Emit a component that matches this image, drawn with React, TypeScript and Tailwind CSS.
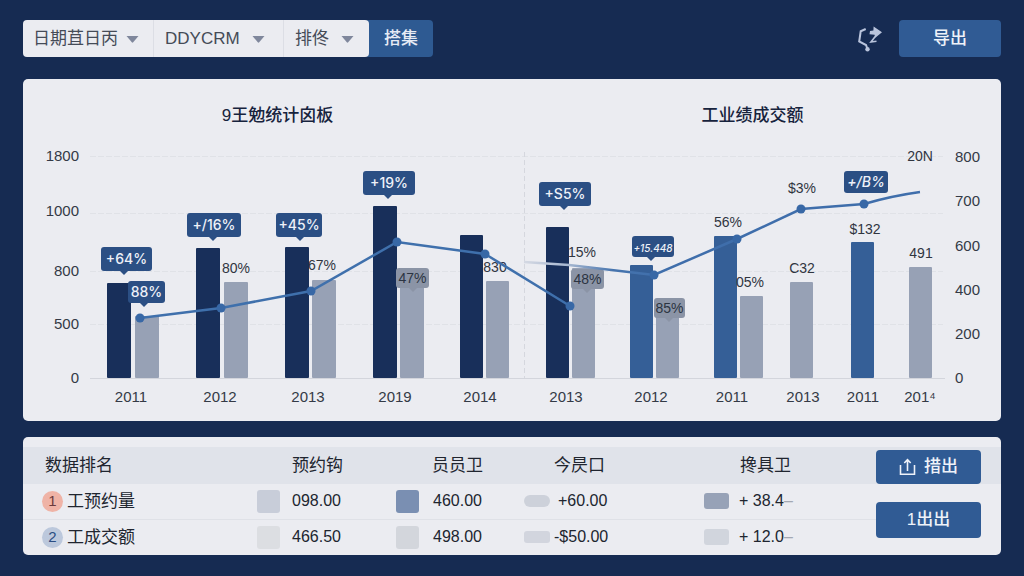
import { clsx } from "clsx";

const filters = [
  { id: "date", label: "日期", options: ["日期苴日丙"], width: "w-[130px] pl-[10px]", caret: "right-[14px]" },
  { id: "source", label: "CRM", options: ["DDYCRM"], width: "w-[130px] pl-3", caret: "right-[18px]" },
  { id: "rank", label: "排名", options: ["排佟"], width: "w-[86px] pl-3", caret: "right-[15px]" },
];

const BASELINE = 238;

const bars = [
  { x: 84, top: 143, tone: "navy" },
  { x: 112, top: 176, tone: "gray" },
  { x: 173, top: 108, tone: "navy" },
  { x: 201, top: 142, tone: "gray" },
  { x: 262, top: 107, tone: "navy" },
  { x: 289, top: 140, tone: "gray" },
  { x: 350, top: 66, tone: "navy" },
  { x: 377, top: 130, tone: "gray" },
  { x: 437, top: 95, tone: "navy" },
  { x: 463, top: 141, tone: "gray" },
  { x: 523, top: 87, tone: "navy" },
  { x: 549, top: 128, tone: "gray" },
  { x: 607, top: 125, tone: "blue" },
  { x: 633, top: 160, tone: "gray" },
  { x: 691, top: 96, tone: "blue" },
  { x: 717, top: 156, tone: "gray" },
  { x: 767, top: 142, tone: "gray" },
  { x: 828, top: 102, tone: "blue" },
  { x: 886, top: 127, tone: "gray" },
];

const barFill: Record<string, string> = {
  navy: "fill-[#182f5a]",
  blue: "fill-[#355f97]",
  gray: "fill-[#97a1b5]",
};

const years = [
  { x: 108, text: "2011" },
  { x: 197, text: "2012" },
  { x: 285, text: "2013" },
  { x: 372, text: "2019" },
  { x: 457, text: "2014" },
  { x: 543, text: "2013" },
  { x: 628, text: "2012" },
  { x: 709, text: "2011" },
  { x: 780, text: "2013" },
  { x: 840, text: "2011" },
  { x: 897, text: "201⁴" },
];

const leftAxis = [
  { y: 16, text: "1800" },
  { y: 71, text: "1000" },
  { y: 131, text: "800" },
  { y: 184, text: "500" },
  { y: 238, text: "0" },
];

const rightAxis = [
  { y: 17, text: "800" },
  { y: 61, text: "700" },
  { y: 106, text: "600" },
  { y: 150, text: "400" },
  { y: 194, text: "200" },
  { y: 238, text: "0" },
];

const labels = [
  { x: 213, y: 128, text: "80%" },
  { x: 299, y: 125, text: "67%" },
  { x: 472, y: 127, text: "830" },
  { x: 559, y: 112, text: "15%" },
  { x: 705, y: 82, text: "56%" },
  { x: 727, y: 142, text: "05%" },
  { x: 779, y: 48, text: "$3%" },
  { x: 779, y: 128, text: "C32" },
  { x: 842, y: 89, text: "$132" },
  { x: 898, y: 113, text: "491" },
  { x: 897, y: 16, text: "20N" },
];

type Badge = {
  x: number;
  y: number;
  w: number;
  h: number;
  tip?: number;
  text: string;
  muted?: boolean;
  className?: string;
};

const badges: Badge[] = [
  { x: 78, y: 107, w: 51, h: 24, tip: 101, text: "+64%" },
  { x: 105, y: 141, w: 37, h: 22, tip: 121, text: "88%" },
  { x: 164, y: 73, w: 54, h: 24, tip: 190, text: "+/16%" },
  { x: 253, y: 73, w: 46, h: 24, tip: 277, text: "+45%" },
  { x: 340, y: 31, w: 52, h: 24, tip: 365, text: "+19%" },
  { x: 516, y: 42, w: 52, h: 24, tip: 541, text: "+S5%" },
  { x: 609, y: 96, w: 42, h: 21, tip: 628, text: "+15.448", className: "text-[10px] italic" },
  { x: 821, y: 31, w: 44, h: 22, text: "+/B%", className: "text-[14px] italic" },
  { x: 373, y: 128, w: 33, h: 20, tip: 390, text: "47%", muted: true },
  { x: 548, y: 129, w: 33, h: 20, tip: 564, text: "48%", muted: true },
  { x: 631, y: 158, w: 31, h: 20, tip: 646, text: "85%", muted: true },
];

const firstLine = [
  [117, 178],
  [198, 168],
  [288, 151],
  [374, 102],
  [462, 114],
  [547, 166],
];

const secondDots = [
  [631, 135],
  [714, 99],
  [778, 69],
  [841, 64],
];

const columns = [
  { title: "预约钩", pad: "pl-[35px]" },
  { title: "员员卫", pad: "pl-9" },
  { title: "今昃口", pad: "pl-[30px]" },
  { title: "搀具卫", pad: "pl-9" },
];

const rows = [
  {
    rank: 1,
    name: "工预约量",
    badge: "bg-[#efb3a6] text-[#6b3a3c]",
    cells: [
      { value: "098.00", swatch: "h-[23px] w-[23px] mr-3 bg-[#c8cdd9]" },
      { value: "460.00", swatch: "h-[23px] w-[23px] mr-[14px] bg-[#7a8fb2]" },
      { value: "+60.00", swatch: "h-3 w-[26px] mr-2 rounded-md bg-[#cdd1da]" },
      { value: "+ 38.4", swatch: "h-4 w-[25px] mr-[10px] bg-[#97a2b7]" },
    ],
  },
  {
    rank: 2,
    name: "工成交额",
    badge: "bg-[#bcc8dc] text-[#2b4d83]",
    cells: [
      { value: "466.50", swatch: "h-[23px] w-[23px] mr-3 bg-[#dcdee2]" },
      { value: "498.00", swatch: "h-[23px] w-[23px] mr-[14px] bg-[#d3d6dc]" },
      { value: "-$50.00", swatch: "h-3 w-[26px] mr-1 bg-[#d2d5de]" },
      { value: "+ 12.0", swatch: "h-4 w-[25px] mr-[10px] bg-[#d1d5dd]" },
    ],
  },
];

function FilterBar() {
  return (
    <form className="flex h-full" onSubmit={(e) => e.preventDefault()}>
      <div className="relative z-10 flex items-stretch rounded-[4px] bg-[#ebecf1]">
        {filters.map((filter, index) => (
          <div key={filter.id} className={clsx("relative flex", index > 0 && "border-l border-[#dcdee5]")}>
            <select
              aria-label={filter.label}
              className={clsx(
                "appearance-none bg-transparent pt-px pr-7 text-[17px] text-[#454b57] outline-none",
                filter.width,
                index > 0 && "-ml-px",
              )}
            >
              {filter.options.map((option) => (
                <option key={option}>{option}</option>
              ))}
            </select>
            <svg
              viewBox="0 0 13 7"
              className={clsx("pointer-events-none absolute top-4 h-[7px] w-[13px] fill-[#7f879c]", filter.caret)}
            >
              <path d="M0.5 0h12L7.2 6.3a1 1 0 0 1-1.4 0z" />
            </svg>
          </div>
        ))}
      </div>
      <button type="submit" className="-ml-1 w-[68px] rounded-[4px] bg-[#2e5a92] pt-px pl-1 text-[17px] font-medium text-[#e6ebf5]">
        搭集
      </button>
    </form>
  );
}

function BadgeShape({ x, y, w, h, tip, text, muted, className }: Badge) {
  return (
    <g className={muted ? "fill-[#8b94a6]" : "fill-[#2b4f84]"}>
      <rect x={x} y={y} width={w} height={h} rx={3} />
      {tip && <path d={`M${tip - 5} ${y + h - 1}h10l-5 5z`} />}
      <text
        x={x + w / 2}
        y={y + h / 2 + 5}
        textAnchor="middle"
        className={clsx(
          muted ? "fill-[#2c3442]" : "fill-[#eef1f8] font-medium font-['Inter',sans-serif]",
          className ?? "text-[14px]",
        )}
      >
        {text}
      </text>
    </g>
  );
}

function Chart() {
  return (
    <svg viewBox="0 0 978 270" className="mt-3 block h-auto w-full" role="img" aria-label="业绩统计">
      <defs>
        <linearGradient id="trend" gradientUnits="userSpaceOnUse" x1="501" y1="0" x2="650" y2="0">
          <stop offset="0" stopColor="#d5d9e3" />
          <stop offset="0.3" stopColor="#a5b6d0" />
          <stop offset="0.6" stopColor="#4674ae" />
          <stop offset="1" stopColor="#3f6eab" />
        </linearGradient>
      </defs>

      {/* Grid */}
      <g className="stroke-[#e0e2e7]">
        {[16, 73, 131, 184].map((y) => (
          <line key={y} x1={67} x2={920} y1={y + 0.5} y2={y + 0.5} strokeDasharray="6 2" />
        ))}
        <line x1={501.5} x2={501.5} y1={12} y2={238} strokeDasharray="5 3" className="stroke-[#d5d7de]" />
      </g>

      {bars.map((bar) => (
        <rect
          key={bar.x}
          x={bar.x}
          y={bar.top}
          width={bar.x < 420 ? 24 : 23}
          height={BASELINE - bar.top}
          rx={1}
          className={barFill[bar.tone]}
        />
      ))}
      <line x1={67} x2={922} y1={238.5} y2={238.5} className="stroke-[#d3d5dc]" />

      {/* Axes */}
      <g className="fill-[#343a46] text-[15px]">
        {leftAxis.map((tick) => (
          <text key={tick.text} x={56} y={tick.y + 5} textAnchor="end">
            {tick.text}
          </text>
        ))}
        {years.map((year) => (
          <text key={year.x} x={year.x} y={262} textAnchor="middle">
            {year.text}
          </text>
        ))}
        {rightAxis.map((tick) => (
          <text key={tick.text} x={932} y={tick.y + 5}>
            {tick.text}
          </text>
        ))}
      </g>

      <g className="fill-[#30353f] text-[14px]">
        {labels.map((label) => (
          <text key={label.text} x={label.x} y={label.y + 5} textAnchor="middle">
            {label.text}
          </text>
        ))}
      </g>

      {badges.map((badge) => (
        <BadgeShape key={badge.x} {...badge} />
      ))}

      {/* Trend lines */}
      <polyline
        points={firstLine.map((p) => p.join(",")).join(" ")}
        className="fill-none stroke-[#3f70ac]"
        strokeWidth={2.5}
      />
      <path
        d="M501 122L546 125L631 135L714 99L778 69L841 64Q868 56 897 52"
        fill="none"
        stroke="url(#trend)"
        strokeWidth={2.5}
      />
      {[...firstLine, ...secondDots].map(([x, y]) => (
        <circle key={x} cx={x} cy={y} r={4.5} className="fill-[#3868a6]" />
      ))}
    </svg>
  );
}

function RankingTable() {
  return (
    <table className="w-full table-fixed border-collapse text-[#20252f]">
      <colgroup>
        <col className="w-[234px]" />
        <col className="w-[139px]" />
        <col className="w-[128px]" />
        <col className="w-[180px]" />
        <col className="w-[172px]" />
        <col className="w-[125px]" />
      </colgroup>
      <thead>
        <tr className="h-[37px] bg-[#e0e3ea] text-left text-[17px]">
          <th className="pt-px pl-[22px] font-normal">数据排名</th>
          {columns.map((column) => (
            <th key={column.title} className={clsx("pt-px font-normal", column.pad)}>
              {column.title}
            </th>
          ))}
          <th className="pr-5 align-bottom">
            <button
              type="button"
              className="flex h-[34px] w-full items-center justify-center gap-[7px] rounded-[4px] bg-[#305b94] font-medium text-[#eef2f9]"
            >
              <svg viewBox="0 0 18 18" className="h-[18px] w-[18px] fill-none stroke-current" strokeWidth={1.6}>
                <path d="M1.5 7v9.2h14V7" />
                <path d="M8.5 13V2M5.3 5l3.2-3.4L11.7 5" />
              </svg>
              措出
            </button>
          </th>
        </tr>
      </thead>
      <tbody>
        {rows.map((row, index) => (
          <tr key={row.rank} className={index === 0 ? "h-[35px]" : "h-9"}>
            <td className={clsx("pl-[19px]", index === 0 && "border-b border-[#dfe1e7]")}>
              <div className="flex items-center gap-1 text-[17px]">
                <span className={clsx("flex h-[21px] w-[21px] items-center justify-center rounded-full text-[15px]", row.badge)}>
                  {row.rank}
                </span>
                {row.name}
              </div>
            </td>
            {row.cells.map((cell, i) => (
              <td key={i} className={clsx(index === 0 && "border-b border-[#dfe1e7]")}>
                <div className="flex items-center text-[16px]">
                  <span className={clsx("rounded-[3px]", cell.swatch)} />
                  {cell.value}
                  {i === 3 && <span className="text-[#a3a8b3]">–</span>}
                </div>
              </td>
            ))}
            {index === 0 && (
              <td rowSpan={2} className="pr-5">
                <button type="button" className="flex h-9 w-full items-center justify-center rounded-[4px] bg-[#305b94] text-[17px] font-medium text-[#eef2f9]">
                  1出出
                </button>
              </td>
            )}
          </tr>
        ))}
      </tbody>
    </table>
  );
}

export default function App() {
  return (
    <main className="flex min-h-screen flex-col bg-[#162b52] px-[23px] pt-5 pb-5 font-['Liberation_Sans','Noto_Sans_CJK_SC',sans-serif]">
      <header className="flex h-[37px] items-center justify-between">
        <FilterBar />
        <div className="flex h-full items-center gap-4">
          <button type="button" aria-label="分享" className="text-[#b9c4dc]">
            <svg viewBox="0 0 26 28" className="h-7 w-[26px] fill-none stroke-current" strokeWidth={2}>
              <path d="M8.7 4L3.7 6.3L2.2 16.5L9 20L10.5 24" />
              <circle cx="10.5" cy="24.3" r="2.2" className="fill-current stroke-none" />
              <path d="M16.6 1.6L25 7.3L18.3 12.7L17.6 9.8L12.5 9.2L13 6L16.4 5.4z" className="fill-current stroke-none" />
              <path d="M18.6 11L14 17L19.5 16.2" strokeWidth={1.6} />
            </svg>
          </button>
          <button type="button" className="h-full w-[102px] rounded-[4px] bg-[#305b94] pt-px text-[17px] font-medium text-[#eef2f9]">
            导出
          </button>
        </div>
      </header>

      <section className="mt-[22px] rounded-[5px] bg-[#ebecf1] pt-[25px] pb-[11px]">
        <div className="grid grid-cols-2 text-center text-[17px] leading-6 font-medium text-[#17233d]">
          <h2 className="pl-5">9王勉统计囟板</h2>
          <h2 className="pr-2">工业绩成交额</h2>
        </div>
        <Chart />
      </section>

      <section className="mt-4 overflow-hidden rounded-[5px] bg-[#ebecf1] pt-[10px]">
        <RankingTable />
      </section>
    </main>
  );
}
